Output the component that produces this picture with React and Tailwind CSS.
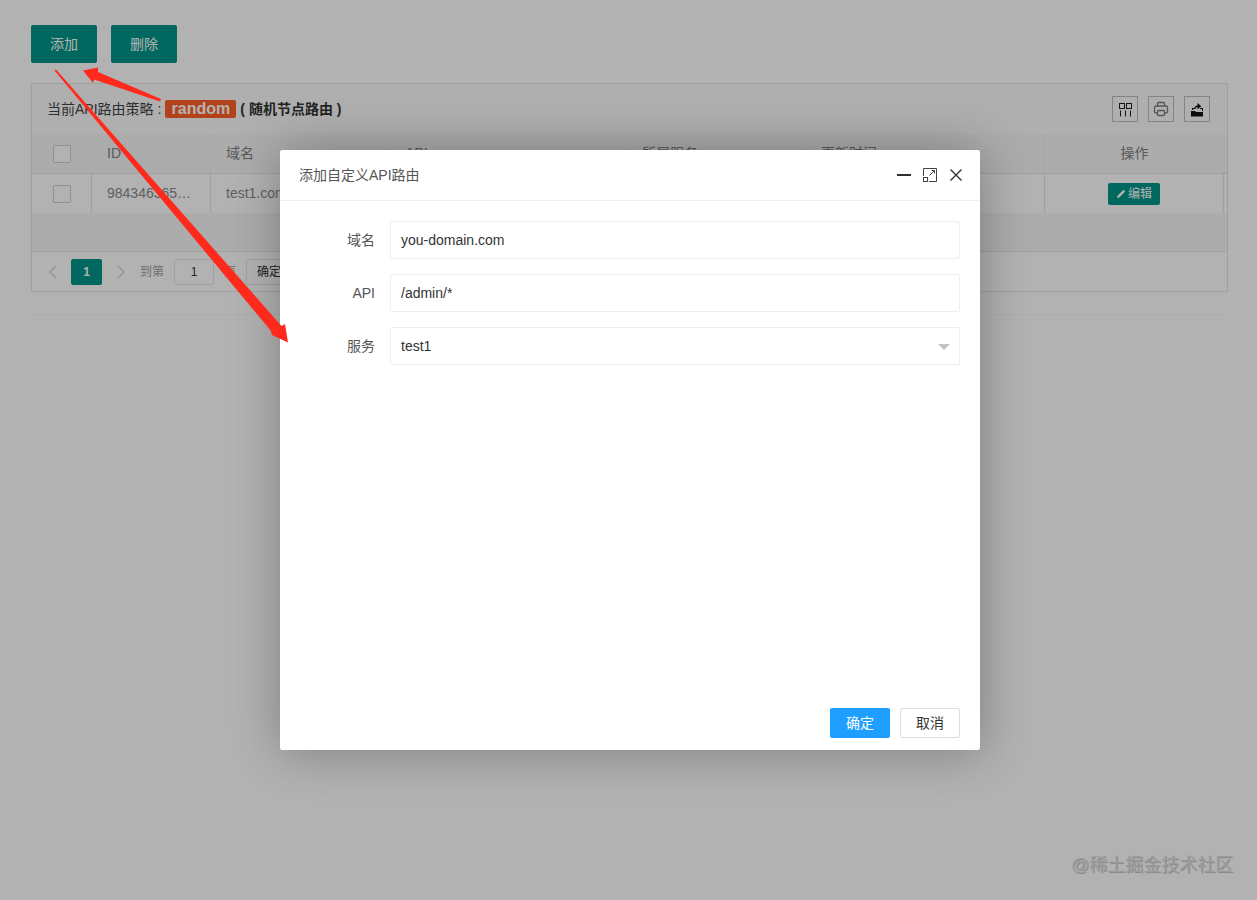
import React from "react";

const FONT = "font-['Liberation_Sans','Noto_Sans_CJK_SC',sans-serif]";
const COLS = [
  "w-[60px]",
  "w-[119px]",
  "w-[179px]",
  "w-[237px]",
  "w-[179px]",
  "w-[239px]",
  "w-[179px]",
];

function Checkbox() {
  return <span className="block h-[18px] w-[18px] rounded-[2px] border border-[#cfcfcf] bg-white" />;
}

function ColsIcon() {
  return (
    <svg width="14" height="15" viewBox="0 0 14 15" fill="none" stroke="#1f1f1f" strokeWidth="1">
      <rect x="1.5" y="1.5" width="5" height="5" />
      <rect x="8.5" y="1.5" width="5" height="5" />
      <path d="M2.5 8.5V14.5M7.5 8.5V14.5M12.5 8.5V14.5" />
    </svg>
  );
}

function PrintIcon() {
  return (
    <svg width="16" height="16" viewBox="0 0 16 16" fill="none" stroke="#7a7a7a" strokeWidth="1.3">
      <path d="M4.5 5V2.5a1 1 0 0 1 1-1h5a1 1 0 0 1 1 1V5" />
      <path d="M4.5 12H3a1.5 1.5 0 0 1-1.5-1.5v-4A1.5 1.5 0 0 1 3 5h10a1.5 1.5 0 0 1 1.5 1.5v4A1.5 1.5 0 0 1 13 12h-1.5" />
      <rect x="4.5" y="9.5" width="7" height="5" rx="1" />
    </svg>
  );
}

function ExportIcon() {
  return (
    <svg width="14" height="15" viewBox="0 0 14 15" fill="none">
      <path d="M1 9h4l1 1h7v4.5H1z" fill="#111" />
      <path d="M2.5 8V6.5h3M10 6.5h2.5V9" stroke="#111" strokeWidth="1.1" />
      <path d="M4 7C4.4 4.6 5.8 3.4 7.5 3.4V1l3.8 3.2-3.8 3.1V5.2C6.200 5.200 5 5.700 4 7z" fill="#111" />
    </svg>
  );
}

function ToolButton({ children }) {
  return (
    <span className="flex h-[26px] w-[26px] items-center justify-center border border-[#bdbdbd]">{children}</span>
  );
}

function Chevron({ flip }) {
  return (
    <svg width="10" height="14" viewBox="0 0 10 14" fill="none" stroke="#d0d0d0" strokeWidth="1.3">
      <path d={flip ? "M2 1l6 6-6 6" : "M8 1L2 7l6 6"} />
    </svg>
  );
}

function Cell({ className, children, center, line }) {
  return (
    <div className={`flex h-full items-center border-r px-[15px] ${line} ${center ? "justify-center" : ""} ${className}`}>
      {children}
    </div>
  );
}

function Field({ label, value, select }) {
  return (
    <div className="flex h-[38px] items-center">
      <label className="w-[95px] pr-[15px] text-right text-[14px] text-[#555]">{label}</label>
      <div className="relative flex h-[38px] flex-1 items-center rounded-[2px] border border-[#eeeeee] pl-[10px] text-[14px] text-[#333]">
        {value}
        {select && (
          <span className="absolute right-[9px] top-[16px] h-0 w-0 border-x-[6px] border-t-[6px] border-x-transparent border-t-[#c2c2c2]" />
        )}
      </div>
    </div>
  );
}

export default function App() {
  const head = "border-[#f0f0f0]";
  const row = "border-[#e6e6e6]";
  return (
    <div className={`relative h-[900px] w-full overflow-hidden bg-white ${FONT}`}>
      <main className="px-[31px] pt-[25px]">
        <div className="flex gap-[14px]">
          <button className="h-[38px] w-[66px] rounded-[2px] bg-[#009688] text-[14px] text-white">添加</button>
          <button className="h-[38px] w-[66px] rounded-[2px] bg-[#009688] text-[14px] text-white">删除</button>
        </div>

        <section className="mt-[20px] h-[209px] w-[1197px] border border-[#e6e6e6]">
          <div className="flex h-[50px] items-center justify-between bg-[#fbfbfb] pl-[15px] pr-[17px] text-[14px] text-[#444]">
            <div className="flex items-center">
              <span>当前API路由策略 :</span>
              <span className="ml-[4px] flex h-[18px] w-[71px] items-center justify-center rounded-[2px] bg-[#ff5f25] text-[16px] font-bold text-white">
                random
              </span>
              <b className="ml-[4px] font-bold text-[#333]">( 随机节点路由 )</b>
            </div>
            <div className="flex gap-[10px]">
              <ToolButton><ColsIcon /></ToolButton>
              <ToolButton><PrintIcon /></ToolButton>
              <ToolButton><ExportIcon /></ToolButton>
            </div>
          </div>

          <div className="flex h-[40px] border-b border-[#e6e6e6] bg-[#f6f6f6] text-[14px] text-[#808080]">
            <div className={`${COLS[0]} flex items-center justify-center`}><Checkbox /></div>
            <Cell line={head} className={COLS[1]}>ID</Cell>
            <Cell line={head} className={COLS[2]}>域名</Cell>
            <Cell line={head} className={COLS[3]}>API</Cell>
            <Cell line={head} className={COLS[4]}>所属服务</Cell>
            <Cell line={head} className={COLS[5]}>更新时间</Cell>
            <div className={`${COLS[6]} flex items-center justify-center`}>操作</div>
          </div>

          <div className="flex h-[39px] text-[14px] text-[#8a8a8a]">
            <div className={`${COLS[0]} flex items-center justify-center border-r border-[#e6e6e6]`}><Checkbox /></div>
            <Cell line={row} className={COLS[1]}><span className="truncate">98434636512345</span></Cell>
            <Cell line={row} className={COLS[2]}>test1.com</Cell>
            <Cell line={row} className={COLS[3]}>/*</Cell>
            <Cell line={row} className={COLS[4]}>test1</Cell>
            <Cell line={row} className={COLS[5]}>2021-01-01</Cell>
            <Cell line={row} className={COLS[6]} center>
              <span className="flex h-[22px] w-[52px] items-center justify-center gap-[2px] rounded-[2px] bg-[#009688] text-[12px] text-white">
                <svg width="10" height="10" viewBox="0 0 10 10" fill="#fff"><path d="M7.500.8l1.700 1.700-5.900 5.900L1 9l.6-2.300z" /></svg>
                编辑
              </span>
            </Cell>
          </div>

          <div className="h-[38px] bg-[#f7f7f7]" />

          <div className="flex h-[41px] items-center border-t border-[#e6e6e6] pl-[16px] text-[12px] text-[#a0a0a0]">
            <Chevron />
            <span className="ml-[13px] flex h-[26px] w-[31px] items-center justify-center rounded-[2px] bg-[#009688] font-bold text-white">1</span>
            <span className="ml-[14px]"><Chevron flip /></span>
            <span className="ml-[14px]">到第</span>
            <span className="ml-[10px] flex h-[26px] w-[40px] items-center justify-center rounded-[2px] border border-[#e6e6e6] text-[#333]">1</span>
            <span className="ml-[10px]">页</span>
            <span className="ml-[10px] flex h-[26px] w-[53px] items-center rounded-[2px] border border-[#e6e6e6] pl-[10px] text-[#333]">确定</span>
          </div>
        </section>

        <div className="mt-[22px] h-px w-[1197px] bg-[#f8f8f8]" />
      </main>

      <div className="absolute inset-0 bg-black/30" />

      <div className="absolute left-[280px] top-[150px] flex h-[600px] w-[700px] flex-col rounded-[2px] bg-white shadow-[1px_1px_50px_rgba(0,0,0,0.3)]">
        <header className="flex h-[51px] items-center justify-between border-b border-[#f0f0f0] pl-[19px] pr-[18px]">
          <span className="text-[14px] text-[#555]">添加自定义API路由</span>
          <div className="flex items-center">
            <svg width="14" height="14" viewBox="0 0 14 14" fill="none" stroke="#2f2f2f" strokeWidth="2"><path d="M0 7h14" /></svg>
            <svg className="ml-[12px]" width="14" height="14" viewBox="0 0 14 14" fill="none" stroke="#444" strokeWidth="1"><path d="M.5 8V.5h13v13H6" /><rect x=".5" y="9.500" width="4" height="4" /><path d="M6.500 7.500l5-5M8.500 2.500h3v3" /></svg>
            <svg className="ml-[13px]" width="12" height="12" viewBox="0 0 12 12" fill="none" stroke="#333" strokeWidth="1.4"><path d="M.5.5l11 11M11.500.5l-11 11" /></svg>
          </div>
        </header>

        <form className="flex flex-1 flex-col gap-[15px] pl-[15px] pr-[20px] pt-[20px]">
          <Field label="域名" value="you-domain.com" />
          <Field label="API" value="/admin/*" />
          <Field label="服务" value="test1" select />
        </form>

        <footer className="flex justify-end gap-[10px] pb-[12px] pr-[20px]">
          <button type="button" className="h-[30px] w-[60px] rounded-[2px] bg-[#1e9fff] text-[14px] text-white">确定</button>
          <button type="button" className="h-[30px] w-[60px] rounded-[2px] border border-[#dedede] bg-white text-[14px] text-[#333]">取消</button>
        </footer>
      </div>

      <svg className="absolute inset-0 h-[900px] w-[1257px]" viewBox="0 0 1257 900" fill="#ff2a1c">
        <polygon points="54.5,70.5 56,69.5 281.5,326 285,324 288,342.5 272,335 271,331" />
        <polygon points="83,70.5 98,67.500 98,72 161,99 160,101.500 94,79.500 93,83" />
      </svg>

      <div className="absolute left-[1071px] top-[854px] text-[18px] leading-[22px] text-[#9c9c9c] [text-shadow:1px_1px_0_rgba(90,90,90,0.45)]">
        @稀土掘金技术社区
      </div>
    </div>
  );
}
